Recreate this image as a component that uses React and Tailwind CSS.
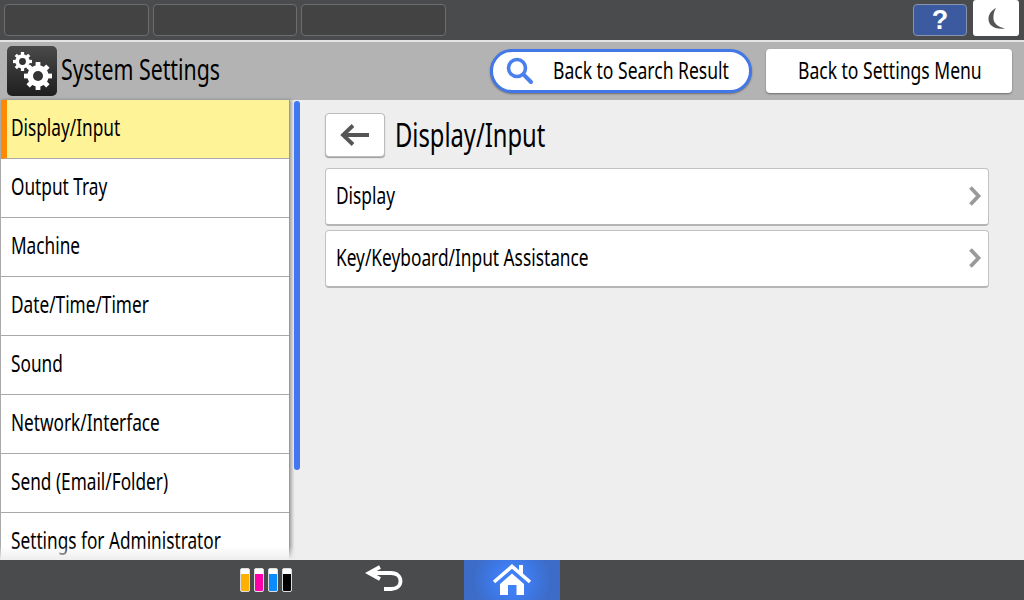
const menuItems = [
  'Display/Input',
  'Output Tray',
  'Machine',
  'Date/Time/Timer',
  'Sound',
  'Network/Interface',
  'Send (Email/Folder)',
  'Settings for Administrator',
]

function Label({ children, className = '' }) {
  return <span className={`inline-block origin-left scale-x-[0.73] whitespace-nowrap font-['Noto_Sans',sans-serif] text-black ${className}`}>{children}</span>
}

function Gears() {
  const gear = (cx, cy, r, inner, teeth) => {
    const spokes = []
    for (let i = 0; i < teeth; i++) {
      const a = (i * 360) / teeth
      spokes.push(<rect key={i} x={cx - r * 0.17} y={cy - r} width={r * 0.34} height={r * 0.5} fill="#fff" transform={`rotate(${a} ${cx} ${cy})`} />)
    }
    return (
      <g>
        {spokes}
        <circle cx={cx} cy={cy} r={r * 0.76} fill="#fff" />
        <circle cx={cx} cy={cy} r={inner} fill="#333" />
      </g>
    )
  }
  return (
    <div className="flex h-[50px] w-[50px] shrink-0 items-center justify-center rounded-[5px] bg-gradient-to-b from-[#4a4a4a] to-[#1f1f1f]">
      <svg width="50" height="50" viewBox="0 0 50 50">
        {gear(15.5, 15.5, 9.5, 3.4, 8)}
        {gear(31, 30, 14, 5, 8)}
      </svg>
    </div>
  )
}

function TopTab() {
  return <div className="h-8 w-[144.5px] rounded-[4px] border border-[#6c6d6d] bg-[#424342]" />
}

function RowCard({ label }) {
  return (
    <div className="flex h-[58px] w-[664px] items-center justify-between rounded-[4px] border border-[#c2c2c2] border-b-2 border-b-[#b5b5b5] bg-white pl-[10px] pr-[6px]">
      <Label className="-mt-[1px] text-[23.7px]">{label}</Label>
      <svg className="shrink-0" width="14" height="22" viewBox="0 0 14 22">
        <path d="M2.5 2.5 L10.5 11 L2.5 19.5" fill="none" stroke="#9a9a9a" strokeWidth="3.8" />
      </svg>
    </div>
  )
}

function InkBottle({ color }) {
  return (
    <div className="flex h-6 w-[10px] flex-col justify-end rounded-[2px] border border-[#dddddd] bg-white">
      <div className={`h-[17px] w-full rounded-b-[1px] ${color}`} />
    </div>
  )
}

export default function App() {
  return (
    <div className="flex h-[600px] w-[1024px] flex-col overflow-hidden bg-[#eeeeee]">
      <div className="flex h-10 items-center justify-between bg-[#4a4b4d] pl-1 pr-[5px]">
        <div className="flex gap-1">
          <TopTab />
          <TopTab />
          <TopTab />
        </div>
        <div className="flex items-center gap-[6px]">
          <div className="flex h-8 w-[54px] items-center justify-center rounded-[4px] border border-[#8a93ad] bg-[#3b5aa0] font-['Liberation_Sans',sans-serif] text-[27px] font-bold text-white">?</div>
          <div className="-mt-1 flex h-9 w-[46px] items-center justify-center rounded-[3px] bg-white">
            <svg width="22" height="28" viewBox="0 0 22 28">
              <path d="M11 4 C6 6.5 3.5 10.5 3.5 15 C3.5 21 9 26 20 24.5 C13 23 9 19.5 8.5 15 C8.2 11 9 7 11 4 Z" fill="#555" />
            </svg>
          </div>
        </div>
      </div>
      <div className="h-[2px] bg-[#e4e4e4]" />

      <div className="flex h-[58px] items-center justify-between bg-[#b3b3b3] pl-[7px] pr-3">
        <div className="flex items-center gap-1">
          <Gears />
          <Label className="-mt-[2px] text-[29.2px]">System Settings</Label>
        </div>
        <div className="flex items-center gap-[14px]">
          <div className="flex h-11 w-[262px] items-center rounded-full border-[3px] border-[#4277e8] bg-white pl-[12px] shadow-[0_1px_2px_rgba(0,0,0,0.4)]">
            <svg className="shrink-0" width="30" height="30" viewBox="0 0 30 30">
              <circle cx="12" cy="12" r="8.5" fill="none" stroke="#4a80ee" strokeWidth="3.6" />
              <path d="M18.5 18.5 L26 26" stroke="#4a80ee" strokeWidth="4" strokeLinecap="round" />
            </svg>
            <Label className="ml-[18px] -mt-[2px] text-[24px]">Back to Search Result</Label>
          </div>
          <div className="flex h-11 w-[246px] items-center rounded-[4px] bg-white pl-8 shadow-[0_1px_2px_rgba(0,0,0,0.4)]">
            <Label className="-mt-[2px] text-[24px]">Back to Settings Menu</Label>
          </div>
        </div>
      </div>

      <div className="relative flex min-h-0 flex-1">
        <div className="w-[290px] shrink-0 border-x border-l-[#aaaaaa] border-r-[#999999] bg-white shadow-[2px_0_3px_rgba(0,0,0,0.3)]">
          {menuItems.map((item, i) => (
            <div key={item} className={`flex h-[59px] items-center border-b border-[#a9a9a9] ${i === 0 ? 'border-l-[6px] border-l-[#ff8a00] bg-[#fff398] pl-1' : 'pl-[10px]'}`}>
              <Label className="-mt-[2px] text-[23.6px]">{item}</Label>
            </div>
          ))}
        </div>
        <div className="absolute bottom-0 left-0 h-[14px] w-[294px] bg-gradient-to-b from-transparent to-[#eeeeee]" />

        <div className="flex w-[35px] shrink-0 justify-start pl-1 pt-[1px]">
          <div className="h-[369px] w-[6px] rounded-full bg-[#4277f0]" />
        </div>

        <div className="flex flex-col pt-[11px]">
          <div className="flex items-center gap-[10px]">
            <div className="flex h-11 w-[60px] items-center justify-center rounded-[4px] border border-[#bcbcbc] bg-white shadow-[0_1px_1px_rgba(0,0,0,0.35)]">
              <svg width="32" height="24" viewBox="0 0 32 24">
                <path d="M30 12 H5 M14 2.5 L4 12 L14 21.5" fill="none" stroke="#555" strokeWidth="3.8" />
              </svg>
            </div>
            <Label className="text-[32.5px]">Display/Input</Label>
          </div>
          <div className="mt-[12px] flex -translate-y-1 flex-col gap-[4px]">
            <RowCard label="Display" />
            <RowCard label="Key/Keyboard/Input Assistance" />
          </div>
        </div>
      </div>

      <div className="relative flex h-10 shrink-0 items-center bg-[#4a4b4d]">
        <div className="ml-[240px] flex gap-1">
          <InkBottle color="bg-[#ffb000]" />
          <InkBottle color="bg-[#ff00a8]" />
          <InkBottle color="bg-[#0a8cff]" />
          <InkBottle color="bg-black" />
        </div>
        <svg className="ml-[73px]" width="38" height="30" viewBox="0 0 38 30">
          <path d="M15 2 L4 8 L15 14 M5 8 H26 C32 8 35.5 11.5 35.5 16 C35.5 20.5 32 24 26 24 H19" fill="none" stroke="#fff" strokeWidth="3.8" />
        </svg>
        <div className="ml-[61px] flex h-10 w-24 items-center justify-center bg-[radial-gradient(circle,#3f80f8_20%,#3c6cc8_75%)]">
          <svg width="40" height="36" viewBox="0 0 40 36">
            <path d="M2 20 L20 4.5 L38 20" fill="none" stroke="#fff" strokeWidth="3.6" />
            <path d="M27 3 H31 V13 H27 Z" fill="#fff" />
            <path d="M8 22 L20 11.5 L32 22 V33 H24.5 V23 H16 V33 H8 Z" fill="#fff" />
          </svg>
        </div>
      </div>
    </div>
  )
}
